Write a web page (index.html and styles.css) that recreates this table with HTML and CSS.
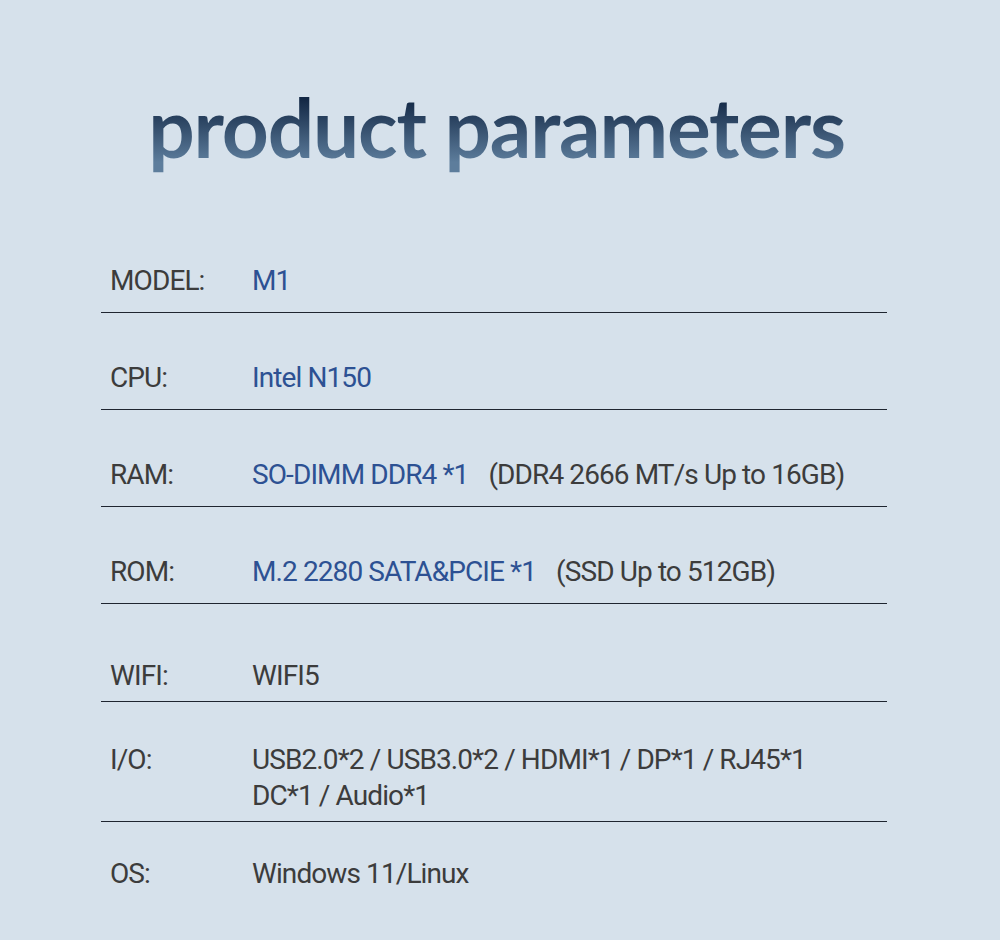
FILE: index.html
```html
<!DOCTYPE html>
<html>
<head>
<meta charset="utf-8">
<link rel="stylesheet" href="styles.css">
</head>
<body>
<div class="page">
  <h1 class="title">product parameters</h1>
  <div class="specs">
    <div class="row first">
      <div class="label">MODEL:</div>
      <div class="value blue">M1</div>
    </div>
    <div class="row">
      <div class="label">CPU:</div>
      <div class="value blue">Intel N150</div>
    </div>
    <div class="row">
      <div class="label">RAM:</div>
      <div class="value"><span class="blue">SO-DIMM DDR4 *1</span><span class="note">(DDR4 2666 MT/s Up to 16GB)</span></div>
    </div>
    <div class="row">
      <div class="label">ROM:</div>
      <div class="value"><span class="blue">M.2 2280 SATA&amp;PCIE *1</span><span class="note">(SSD Up to 512GB)</span></div>
    </div>
    <div class="row row-wifi">
      <div class="label">WIFI:</div>
      <div class="value">WIFI5</div>
    </div>
    <div class="row row-io">
      <div class="label">I/O:</div>
      <div class="value">USB2.0*2 / USB3.0*2 / HDMI*1 / DP*1 / RJ45*1<br>DC*1 / Audio*1</div>
    </div>
    <div class="row row-os">
      <div class="label">OS:</div>
      <div class="value">Windows 11/Linux</div>
    </div>
  </div>
</div>
</body>
</html>
```
FILE: styles.css
```css
html, body {
  margin: 0;
  padding: 0;
}
body {
  background: #d6e1eb;
  width: 1000px;
  height: 940px;
  overflow: hidden;
}
.page {
  padding-top: 78px;
}
.title {
  margin: 0;
  padding-right: 7px;
  text-align: center;
  font-family: Lato, sans-serif;
  font-weight: 700;
  font-size: 82px;
  line-height: 96px;
  letter-spacing: -1.2px;
  background: linear-gradient(180deg, #132845 22%, #5d7d9c 88%);
  -webkit-background-clip: text;
  background-clip: text;
  color: transparent;
}
.specs {
  margin: 89px 0 0 101px;
  width: 786px;
  font-family: Roboto, sans-serif;
  font-size: 28px;
  letter-spacing: -0.9px;
  color: #3c3c3c;
}
.row {
  display: flex;
  border-bottom: 1px solid #1f2530;
  padding: 47px 0 13px;
}
.row.first {
  padding-top: 0;
}
.row.row-wifi {
  padding-top: 54px;
  padding-bottom: 7px;
}
.row.row-io {
  padding-top: 40px;
  padding-bottom: 7px;
}
.row.row-os {
  padding-top: 34px;
  border-bottom: none;
}
.label {
  width: 151px;
  padding-left: 9px;
  box-sizing: border-box;
  line-height: 36px;
}
.value {
  line-height: 36px;
}
.blue {
  color: #2d5193;
}
.note {
  margin-left: 20px;
}
```
